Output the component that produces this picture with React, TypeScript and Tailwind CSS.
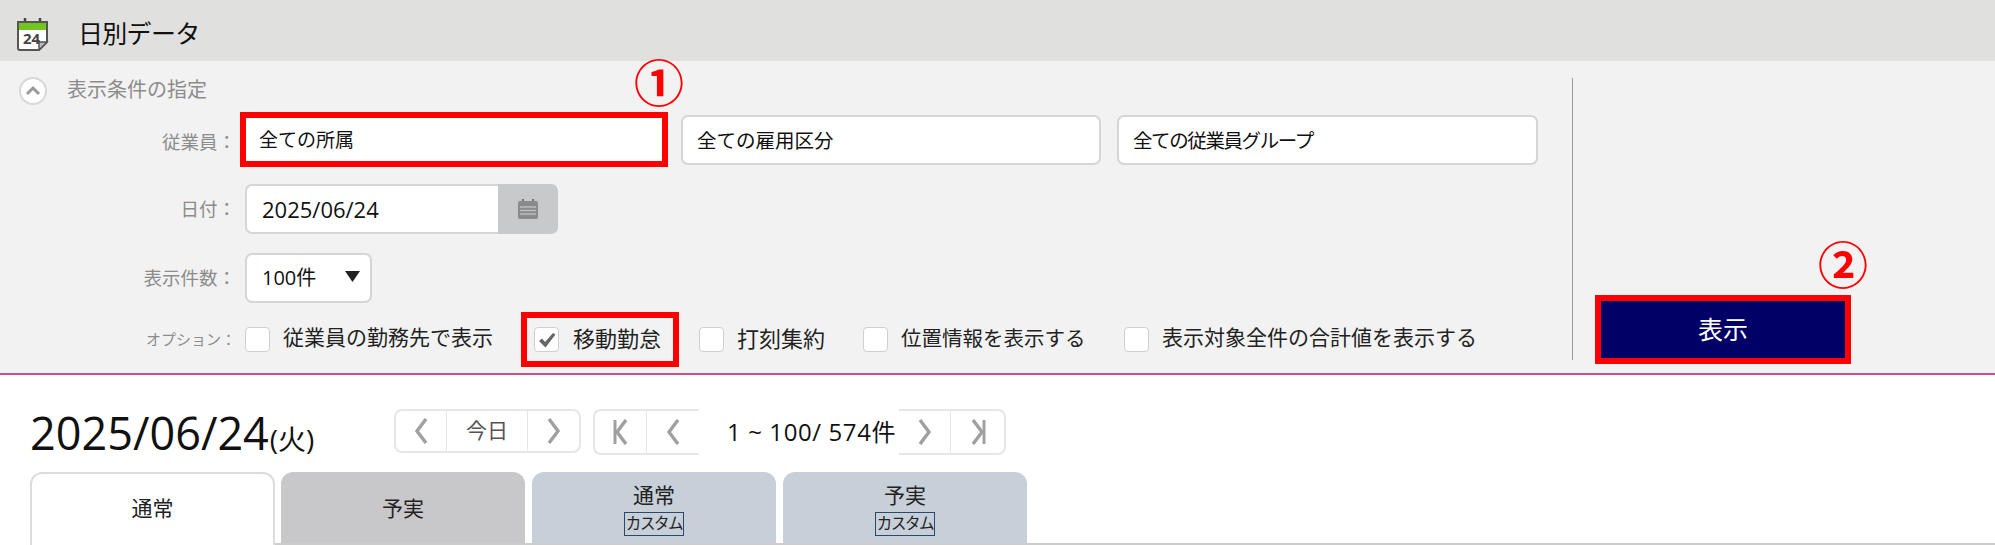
const FONT = "font-['Open_Sans','Noto_Sans_CJK_JP',sans-serif]";

function Chevron({ dir = "left", double = false }: { dir?: "left" | "right"; double?: boolean }) {
  const d = dir === "left" ? "M13 1 L4 13 L13 25" : "M3 1 L12 13 L3 25";
  return (
    <svg width="16" height="26" viewBox="0 0 16 26" fill="none">
      <path d={d} stroke="#a0a0a0" strokeWidth="3.4" strokeLinejoin="miter" />
      {double && <path d={dir === "left" ? "M2 1 V25" : "M14 1 V25"} stroke="#a0a0a0" strokeWidth="3" />}
    </svg>
  );
}

function NavCell({ children, className = "" }: { children: React.ReactNode; className?: string }) {
  return <div className={`flex items-center justify-center h-full ${className}`}>{children}</div>;
}

function Check({ checked = false }: { checked?: boolean }) {
  return (
    <div className="w-[25px] h-[25px] rounded-[4px] border border-[#cfcfcf] bg-white flex items-center justify-center shrink-0">
      {checked && (
        <svg width="20" height="18" viewBox="0 0 20 18">
          <path d="M2 10 L5 7.5 L8 11 L16 2 L18.5 3.5 L8.5 16.5 Z" fill="#666" />
        </svg>
      )}
    </div>
  );
}

function Field({ text, className = "" }: { text: string; className?: string }) {
  return (
    <div className={`h-[50px] bg-white border-2 border-[#d5d5d5] rounded-[7px] flex items-center pl-[14px] pt-[2px] text-[#111] whitespace-nowrap ${className}`}>
      {text}
    </div>
  );
}

function Label({ text, className = "" }: { text: string; className?: string }) {
  return <div className={`w-[236px] shrink-0 text-right text-[#8c8c8c] whitespace-nowrap ${className}`}>{text}</div>;
}

function Tab({ label, custom = false, bg }: { label: string; custom?: boolean; bg: string }) {
  return (
    <div className={`w-[244px] h-full rounded-t-[12px] flex flex-col items-center justify-center text-[21px] text-[#222] ${bg}`}>
      <div className="leading-[30px]">{label}</div>
      {custom && (
        <div className="w-[60px] h-[24px] mt-[2px] border border-[#2b4a6b] flex items-center justify-center text-[15.5px] tracking-[-1.4px] leading-none whitespace-nowrap">
          カスタム
        </div>
      )}
    </div>
  );
}

export default function App() {
  return (
    <div className={`w-[1995px] h-[545px] overflow-hidden bg-white ${FONT}`}>
      <header className="h-[61px] bg-[#e0e0de] flex items-center">
        <svg className="ml-[16px] mt-[6px]" width="33" height="34" viewBox="0 0 33 34">
          <path d="M9 1 V6 M24 1 V6" stroke="#444" strokeWidth="2.5" />
          <path d="M2 5 H31 V13 H2 Z" fill="#72c51f" />
          <path d="M2 13 H31 V25 L23 33 H4 Q2 33 2 31 Z" fill="#fff" />
          <path d="M2 5 H31 V25 L23 33 H4 Q2 33 2 31 Z" fill="none" stroke="#555" strokeWidth="2" />
          <path d="M23 33 V25 H31 Z" fill="#bbb" stroke="#555" strokeWidth="1.5" />
          <text x="7" y="27" fontSize="15" fontWeight="700" fill="#444">24</text>
        </svg>
        <h1 className="ml-[29px] mt-[6px] text-[25px] tracking-[-0.7px] font-normal text-[#111]">日別データ</h1>
      </header>

      <section className="h-[314px] bg-[#f2f2f2] border-b-2 border-[#d04f88] flex">
        <div className="w-[1572px] shrink-0 flex flex-col pt-[16px]">
          <div className="h-[28px] flex items-center pl-[19px]">
            <div className="w-[28px] h-[28px] rounded-full bg-white border-2 border-[#d8d8d8] flex items-center justify-center">
              <svg width="16" height="12" viewBox="0 0 16 12" fill="none">
                <path d="M2 9 L8 3 L14 9" stroke="#9a9a9a" strokeWidth="3" />
              </svg>
            </div>
            <span className="ml-[20px] mb-[2px] text-[20px] text-[#8c8c8c]">表示条件の指定</span>
          </div>

          <div className="relative mt-[7px] h-[55px] flex items-center">
            <Label text="従業員：" className="text-[18.5px] pt-[4px]" />
            <div className="ml-[4px] w-[428px] h-[55px] bg-white border-[6px] border-[#ff0000] flex items-center pl-[13px] pt-[2px] text-[19px] text-[#111]">
              全ての所属
            </div>
            <Field text="全ての雇用区分" className="ml-[13px] w-[420px] text-[19.5px]" />
            <Field text="全ての従業員グループ" className="ml-[16px] w-[421px] text-[19.5px] tracking-[-1.4px]" />
            <span className="absolute left-[633px] top-[-55px] w-[52px] h-[52px] flex items-center justify-center text-[50px] font-bold text-[#ff0000] leading-none">①</span>
          </div>

          <div className="mt-[17px] h-[50px] flex items-center">
            <Label text="日付：" className="text-[18.5px]" />
            <div className="ml-[9px] w-[253px] h-[50px] bg-white border-2 border-r-0 border-[#d5d5d5] rounded-l-[7px] flex items-center pl-[15px] text-[22px] text-[#111]">
              2025/06/24
            </div>
            <div className="w-[60px] h-[50px] bg-[#c8c9cb] rounded-r-[7px] flex items-center justify-center">
              <svg width="22" height="22" viewBox="0 0 22 22">
                <path d="M6 1 V5 M16 1 V5" stroke="#6e6e6e" strokeWidth="2" />
                <rect x="1" y="3" width="20" height="18" rx="2" fill="#8a8a8a" />
                <path d="M3 9 H19 M3 12.5 H19 M3 16 H19" stroke="#bdbdbd" strokeWidth="1.3" />
              </svg>
            </div>
          </div>

          <div className="mt-[19px] h-[50px] flex items-center">
            <Label text="表示件数：" className="text-[18.5px]" />
            <div className="ml-[9px] w-[127px] h-[50px] bg-white border-2 border-[#d5d5d5] rounded-[7px] flex items-center pl-[15px] text-[20px] text-[#111]">
              100件
              <svg className="ml-[29px] mb-[3px]" width="15" height="11" viewBox="0 0 15 11">
                <path d="M0 0 H15 L7.5 11 Z" fill="#222" />
              </svg>
            </div>
          </div>

          <div className="mt-[9px] h-[55px] flex items-center text-[#222] whitespace-nowrap">
            <Label text="オプション：" className="text-[15px]" />
            <div className="ml-[9px] flex items-center">
              <Check />
              <span className="ml-[13px] mb-[3px] w-[211px] text-[21px]">従業員の勤務先で表示</span>
            </div>
            <div className="ml-[27px] w-[158px] h-[55px] border-[6px] border-[#ff0000] flex items-center pl-[7px]">
              <Check checked />
              <span className="ml-[14px] mb-[3px] text-[22px]">移動勤怠</span>
            </div>
            <div className="ml-[20px] flex items-center">
              <Check />
              <span className="ml-[13px] mb-[3px] w-[114px] text-[22px]">打刻集約</span>
            </div>
            <div className="ml-[12px] flex items-center">
              <Check />
              <span className="ml-[13px] mb-[3px] w-[199px] text-[20.5px]">位置情報を表示する</span>
            </div>
            <div className="ml-[24px] flex items-center">
              <Check />
              <span className="ml-[13px] mb-[3px] text-[21px]">表示対象全件の合計値を表示する</span>
            </div>
          </div>
        </div>

        <div className="w-px h-[282px] mt-[17px] bg-[#9a9a9a] shrink-0" />

        <div className="relative ml-[22px] mt-[234px] w-[256px] h-[69px] border-[6px] border-[#ff0000] bg-[#000066] flex items-center justify-center text-white text-[25px]">
          表示
          <span className="absolute left-[216px] top-[-62px] w-[52px] h-[52px] flex items-center justify-center text-[50px] font-bold text-[#ff0000] leading-none">②</span>
        </div>
      </section>

      <div className="h-[34px]" />

      <div className="h-[46px] flex items-center pl-[30px]">
        <div className="w-[364px] shrink-0 flex items-baseline text-[#111]">
          <span className="text-[45px] leading-none">2025/06/24</span>
          <span className="ml-[1px] text-[28px] leading-none">(火)</span>
        </div>

        <div className="w-[187px] h-[44px] self-start bg-white border-2 border-[#e6e6e6] rounded-[8px] flex">
          <NavCell className="w-[51px] border-r border-[#e6e6e6]"><Chevron /></NavCell>
          <NavCell className="w-[81px] border-r border-[#e6e6e6] text-[21px] text-[#555]">今日</NavCell>
          <NavCell className="flex-1"><Chevron dir="right" /></NavCell>
        </div>

        <div className="ml-[12px] w-[106px] h-[46px] bg-white border-2 border-r-0 border-[#e6e6e6] rounded-l-[8px] flex">
          <NavCell className="w-[52px] border-r border-[#e6e6e6]"><Chevron double /></NavCell>
          <NavCell className="flex-1"><Chevron /></NavCell>
        </div>

        <div className="w-[200px] shrink-0 pl-[28px] text-[24px] tracking-[0.6px] text-[#111] whitespace-nowrap">1 ~ 100/ 574件</div>

        <div className="w-[107px] h-[46px] bg-white border-2 border-l-0 border-[#e6e6e6] rounded-r-[8px] flex">
          <NavCell className="w-[52px] border-r border-[#e6e6e6]"><Chevron dir="right" /></NavCell>
          <NavCell className="flex-1"><Chevron dir="right" double /></NavCell>
        </div>
      </div>

      <div className="mt-[17px] h-[74px] pl-[30px] flex items-start">
        <div className="w-[245px] h-[74px] shrink-0 bg-white border-2 border-b-0 border-[#dddddd] rounded-t-[12px] flex items-center justify-center pb-[2px] text-[21px] text-[#222]">
          通常
        </div>
        <div className="flex-1 h-[73px] border-b-2 border-[#cccccc] pl-[6px] flex gap-[7px]">
          <Tab label="予実" bg="bg-[#c8c8ca]" />
          <Tab label="通常" custom bg="bg-[#c7cfd9]" />
          <Tab label="予実" custom bg="bg-[#c7cfd9]" />
        </div>
      </div>
    </div>
  );
}
